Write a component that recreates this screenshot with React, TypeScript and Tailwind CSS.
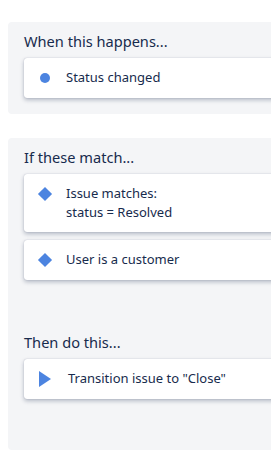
import React from "react";

const Dot = () => (
  <div className="w-[24px] flex justify-center shrink-0">
    <div className="w-[10px] h-[10px] rounded-full bg-[#4C84E0]" />
  </div>
);

const Diamond = () => (
  <div className="w-[24px] h-[19px] flex items-center justify-center shrink-0">
    <div className="w-[10px] h-[10px] rotate-45 bg-[#4C84E0]" />
  </div>
);

const Play = () => (
  <div className="w-[24px] h-[19px] flex items-center justify-center shrink-0">
    <svg width="12" height="16" viewBox="0 0 12 16">
      <polygon points="0,0 12,8 0,16" fill="#4C84E0" />
    </svg>
  </div>
);

const Card = ({ icon, children, gap = "gap-[9px]" }: { icon: React.ReactNode; children: React.ReactNode; gap?: string }) => (
  <div className={`bg-white rounded-[3px] shadow-[0_2px_4px_rgba(9,30,66,0.28),0_0_1px_rgba(9,30,66,0.3)] flex items-start ${gap} pl-[9px] py-[10px] min-h-[40px] text-[13px] leading-[19px] text-[#172B4D]`}>
    <div className="h-[19px] flex items-center">{icon}</div>
    <div>{children}</div>
  </div>
);

const Header = ({ children, className = "" }: { children: React.ReactNode; className?: string }) => (
  <div className={`text-[14.6px] leading-[20px] text-[#172B4D] mb-[7px] ${className}`}>{children}</div>
);

export default function App() {
  return (
    <div
      className="w-[271px] h-[463px] overflow-hidden bg-white"
      style={{ fontFamily: '"Segoe UI", "Noto Sans", "Open Sans", Arial, sans-serif' }}
    >
      <div className="ml-2 mt-[22px] w-[300px] bg-[#F4F5F7] rounded-[4px] pl-4 pt-[9px] pb-[16px]">
        <Header>When this happens...</Header>
        <Card icon={<Dot />}>Status changed</Card>
      </div>
      <div className="ml-2 mt-[24px] w-[300px] bg-[#F4F5F7] rounded-[4px] pl-4 pt-[9px] pb-[51px]">
        <Header>If these match...</Header>
        <div className="flex flex-col gap-2">
          <Card icon={<Diamond />}>
            <div>Issue matches:</div>
            <div>status = Resolved</div>
          </Card>
          <Card icon={<Diamond />}>User is a customer</Card>
        </div>
        <Header className="mt-[52px]">Then do this...</Header>
        <Card icon={<Play />} gap="gap-[11px]">Transition issue to "Close"</Card>
      </div>
    </div>
  );
}
